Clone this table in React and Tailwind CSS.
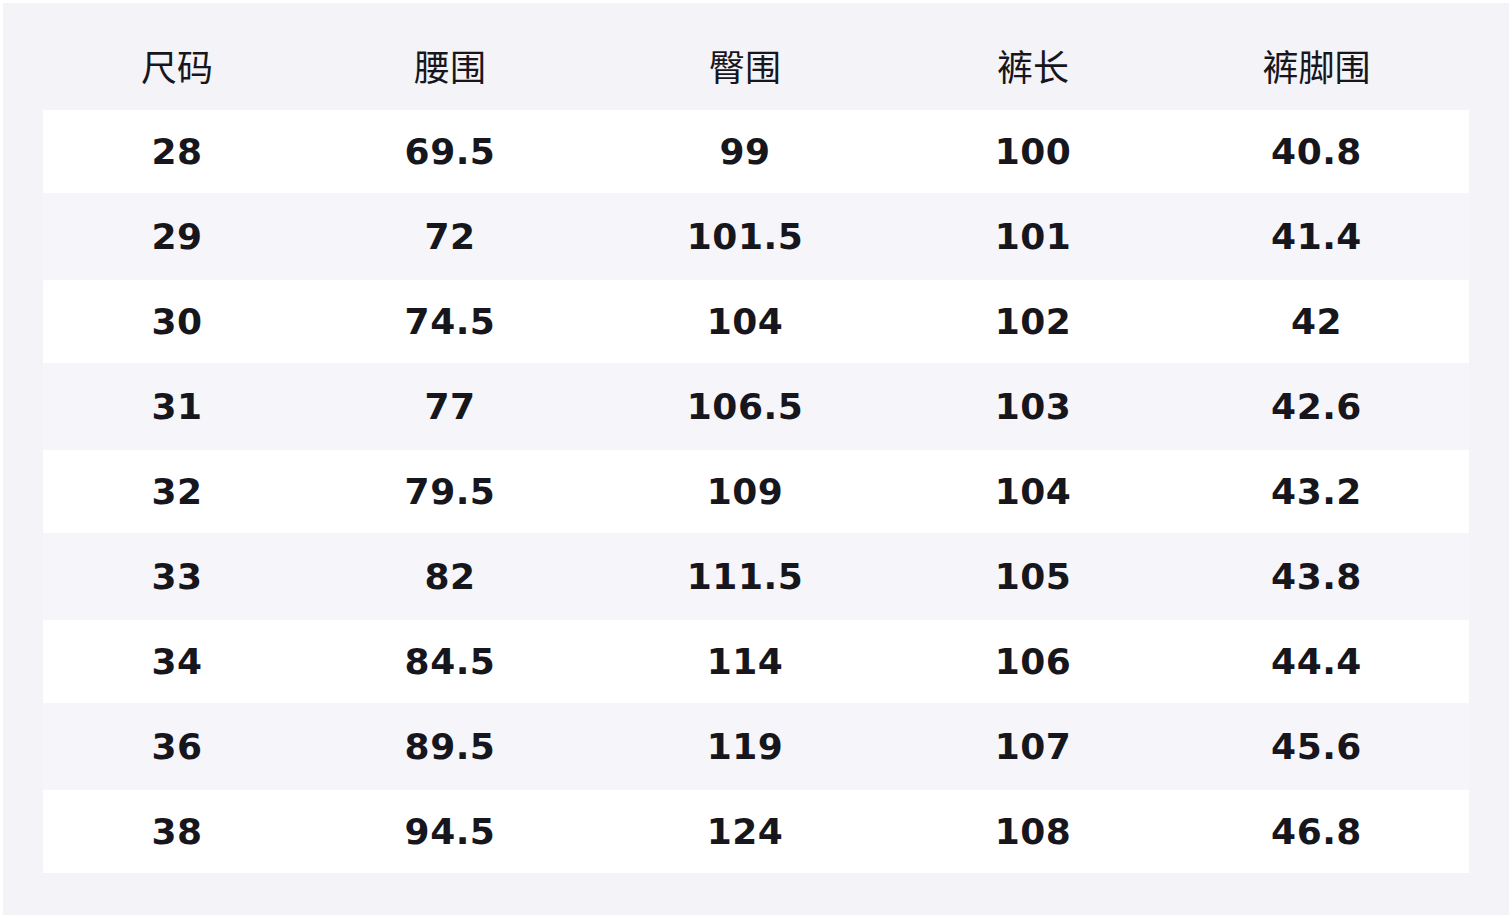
import React from 'react';

const headers = ['尺码', '腰围', '臀围', '裤长', '裤脚围'];

const rows = [
  ['28', '69.5', '99', '100', '40.8'],
  ['29', '72', '101.5', '101', '41.4'],
  ['30', '74.5', '104', '102', '42'],
  ['31', '77', '106.5', '103', '42.6'],
  ['32', '79.5', '109', '104', '43.2'],
  ['33', '82', '111.5', '105', '43.8'],
  ['34', '84.5', '114', '106', '44.4'],
  ['36', '89.5', '119', '107', '45.6'],
  ['38', '94.5', '124', '108', '46.8'],
];

const cols = 'grid grid-cols-[268px_278px_312px_264px_303px]';

export default function App() {
  return (
    <div className="w-[1512px] h-[918px] bg-white p-[3px]">
      <div className="w-full h-full bg-[#f3f3f8] px-[40px] pt-[22px]">
        {/* header */}
        <div
          className={`${cols} h-[85px] pb-[6px] items-center text-center text-[36px] text-[#16161c]`}
          style={{ fontFamily: '"Noto Sans CJK SC", "Noto Sans", sans-serif' }}
        >
          {headers.map((h) => (
            <div key={h}>{h}</div>
          ))}
        </div>

        {/* rows */}
        <div className="font-['DejaVu_Sans',sans-serif] font-bold text-[36px] tracking-[0.5px] text-[#16161c]">
          {rows.map((r, i) => (
            <div
              key={r[0]}
              className={`${cols} items-center text-center ${
                i % 2 === 0 ? 'h-[83px] bg-white' : 'h-[87px] bg-[#f5f5fa]'
              }`}
            >
              {r.map((v, j) => (
                <div key={j}>{v}</div>
              ))}
            </div>
          ))}
        </div>
      </div>
    </div>
  );
}
